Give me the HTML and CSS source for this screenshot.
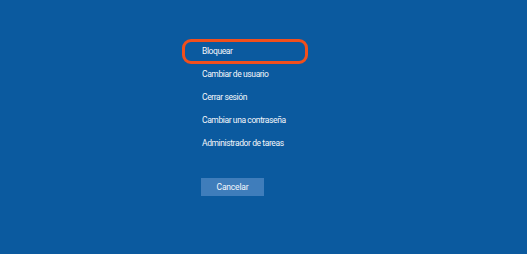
FILE: index.html
```html
<!DOCTYPE html>
<html lang="es">
<head>
  <meta charset="UTF-8">
  <meta name="viewport" content="width=device-width, initial-scale=1.0">
  <title>Opciones de seguridad</title>
  <link rel="stylesheet" href="styles.css">
</head>
<body>
  <div class="options-container">
    <ul class="options-list">
      <li class="option selected">Bloquear</li>
      <li class="option">Cambiar de usuario</li>
      <li class="option">Cerrar sesión</li>
      <li class="option">Cambiar una contraseña</li>
      <li class="option">Administrador de tareas</li>
    </ul>
    <div class="button-group">
      <button type="button" id="cancelar">Cancelar</button>
    </div>
  </div>
</body>
</html>
```

FILE: styles.css
```css
* {
  margin: 0;
  padding: 0;
  box-sizing: border-box;
  font-family: 'Roboto', 'Liberation Sans', sans-serif;
}
html, body {
  height: 100%;
}
body {
  background: #0b5a9f;
  color: #f4f7fb;
  overflow: hidden;
}
.options-container {
  padding-top: 40px;
  padding-left: 183px;
}
.options-list {
  list-style: none;
}
.option {
  width: 124px;
  height: 23px;
  line-height: 23px;
  padding-left: 19px;
  font-size: 8.5px;
  letter-spacing: -0.4px;
  white-space: nowrap;
}
.option.selected {
  outline: 3px solid #f24f1c;
  outline-offset: -2px;
  border-radius: 8px;
}
.button-group {
  margin-top: 20px;
  padding-left: 18px;
}
.button-group button {
  width: 63px;
  height: 18px;
  border: none;
  background: #3f7dbb;
  color: #f4f7fb;
  font-size: 8.5px;
  letter-spacing: -0.2px;
}
```
